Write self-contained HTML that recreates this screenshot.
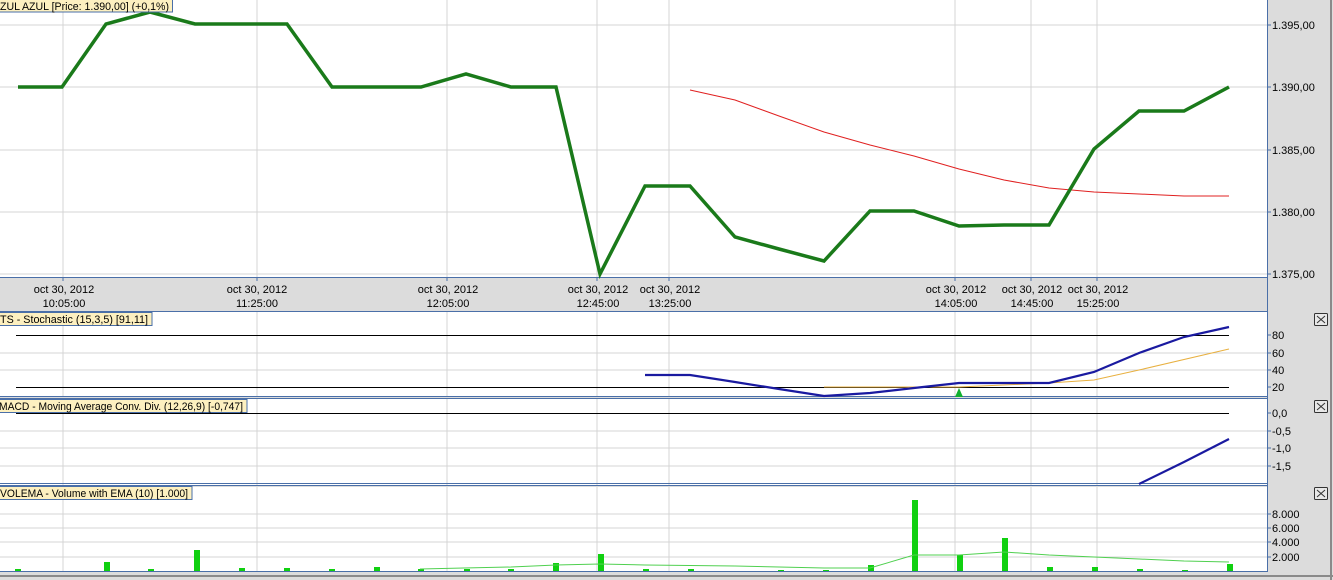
<!DOCTYPE html>
<html><head><meta charset="utf-8"><style>
html,body{margin:0;padding:0;background:#d6d6d6;}
svg{display:block;font-family:"Liberation Sans",Arial,sans-serif;}
</style></head><body>
<svg width="1333" height="580" viewBox="0 0 1333 580" xmlns="http://www.w3.org/2000/svg">
<rect x="0" y="0" width="1333" height="580" fill="#dcdcdc"/>
<line x1="1331" y1="0" x2="1331" y2="580" stroke="#8a8a8a" stroke-width="2"/>
<line x1="0" y1="576" x2="1333" y2="576" stroke="#8a8a8a" stroke-width="2"/>
<rect x="0" y="0" width="1267" height="277" fill="#fff"/>
<rect x="0" y="312" width="1267" height="85" fill="#fff"/>
<rect x="0" y="399" width="1267" height="86" fill="#fff"/>
<rect x="0" y="487" width="1267" height="84" fill="#fff"/>
<g stroke="#d4d4d4" stroke-width="1">
<line x1="0" y1="25" x2="1267" y2="25"/><line x1="0" y1="87" x2="1267" y2="87"/><line x1="0" y1="150" x2="1267" y2="150"/><line x1="0" y1="212" x2="1267" y2="212"/><line x1="0" y1="274" x2="1267" y2="274"/>
<line x1="0" y1="353" x2="1267" y2="353"/><line x1="0" y1="370" x2="1267" y2="370"/>
<line x1="0" y1="431" x2="1267" y2="431"/><line x1="0" y1="448" x2="1267" y2="448"/><line x1="0" y1="466" x2="1267" y2="466"/>
<line x1="0" y1="514" x2="1267" y2="514"/><line x1="0" y1="528" x2="1267" y2="528"/><line x1="0" y1="542" x2="1267" y2="542"/><line x1="0" y1="557" x2="1267" y2="557"/>
<g id="vg">
<line x1="63" y1="0" x2="63" y2="277"/><line x1="257" y1="0" x2="257" y2="277"/><line x1="447" y1="0" x2="447" y2="277"/><line x1="597" y1="0" x2="597" y2="277"/><line x1="669" y1="0" x2="669" y2="277"/><line x1="955" y1="0" x2="955" y2="277"/><line x1="1031" y1="0" x2="1031" y2="277"/><line x1="1097" y1="0" x2="1097" y2="277"/>
</g>
<use href="#vg" transform="translate(0,312) scale(1,0.307)"/>
<use href="#vg" transform="translate(0,399) scale(1,0.31)"/>
<use href="#vg" transform="translate(0,487) scale(1,0.303)"/>
</g>
<g fill="none" stroke="#4a6fa8" stroke-width="1">
<line x1="0" y1="277.5" x2="1267" y2="277.5"/>
<line x1="1267.5" y1="0" x2="1267.5" y2="572"/>
<line x1="0" y1="311.5" x2="1267" y2="311.5"/>
<line x1="0" y1="396.5" x2="1267" y2="396.5"/>
<line x1="0" y1="398.5" x2="1267" y2="398.5"/>
<line x1="0" y1="483.5" x2="1267" y2="483.5"/>
<line x1="0" y1="485.5" x2="1267" y2="485.5"/>
<line x1="0" y1="571.5" x2="1267" y2="571.5"/>
</g>
<polyline fill="none" stroke="#e02020" stroke-width="1" points="690,90 735,100 779,116 824,132 870,145 914,156 959,169 1004,180 1049,188 1094,192 1139,194 1184,196 1229,196"/>
<polyline fill="none" stroke="#1a7a1a" stroke-width="3.5" points="18,87 62,87 106,24 150,12 195,24 240,24 287,24 332,87 376,87 421,87 466,74 511,87 556,87 600,274 645,186 690,186 735,237 779,249 824,261 870,211 914,211 959,226 1004,225 1049,225 1094,149 1139,111 1184,111 1229,87"/>
<rect x="-1" y="-1" width="173.5" height="13" fill="#fdf0c0" stroke="#4a6fa8"/>
<text x="0" y="10" font-size="11" textLength="169" lengthAdjust="spacingAndGlyphs">ZUL AZUL [Price: 1.390,00] (+0,1%)</text>
<g font-size="11" fill="#000">
<g stroke="#4a6fa8"><line x1="1267" y1="25" x2="1271" y2="25"/><line x1="1267" y1="87" x2="1271" y2="87"/><line x1="1267" y1="150" x2="1271" y2="150"/><line x1="1267" y1="212" x2="1271" y2="212"/><line x1="1267" y1="274" x2="1271" y2="274"/></g>
<text x="1272" y="29">1.395,00</text><text x="1272" y="91">1.390,00</text><text x="1272" y="154">1.385,00</text><text x="1272" y="216">1.380,00</text><text x="1272" y="278">1.375,00</text>
</g>
<g font-size="11" fill="#000" text-anchor="middle">
<text x="64" y="293">oct 30, 2012</text><text x="64" y="307">10:05:00</text>
<text x="257" y="293">oct 30, 2012</text><text x="257" y="307">11:25:00</text>
<text x="448" y="293">oct 30, 2012</text><text x="448" y="307">12:05:00</text>
<text x="598" y="293">oct 30, 2012</text><text x="598" y="307">12:45:00</text>
<text x="670" y="293">oct 30, 2012</text><text x="670" y="307">13:25:00</text>
<text x="956" y="293">oct 30, 2012</text><text x="956" y="307">14:05:00</text>
<text x="1032" y="293">oct 30, 2012</text><text x="1032" y="307">14:45:00</text>
<text x="1098" y="293">oct 30, 2012</text><text x="1098" y="307">15:25:00</text>
</g>
<g stroke="#4a6fa8"><line x1="63" y1="277" x2="63" y2="281"/><line x1="257" y1="277" x2="257" y2="281"/><line x1="447" y1="277" x2="447" y2="281"/><line x1="597" y1="277" x2="597" y2="281"/><line x1="669" y1="277" x2="669" y2="281"/><line x1="955" y1="277" x2="955" y2="281"/><line x1="1031" y1="277" x2="1031" y2="281"/><line x1="1097" y1="277" x2="1097" y2="281"/></g>
<line x1="16" y1="335.5" x2="1229" y2="335.5" stroke="#000"/>
<line x1="16" y1="387.5" x2="1229" y2="387.5" stroke="#000"/>
<polyline fill="none" stroke="#e8b040" stroke-width="1" points="824,387 959,387 1049,383 1094,380 1139,370 1229,349"/>
<polyline fill="none" stroke="#1a1aa0" stroke-width="2.2" points="645,375 690,375 735,382 779,389 824,396 870,393 914,388 959,383 1004,383 1049,383 1094,372 1139,353 1184,337 1229,327"/>
<polygon points="959,388 955,397 963,397" fill="#10b030"/>
<rect x="-1" y="312.5" width="153" height="13" fill="#fdf0c0" stroke="#4a6fa8"/>
<text x="0" y="323" font-size="11" textLength="148" lengthAdjust="spacingAndGlyphs">TS - Stochastic (15,3,5) [91,11]</text>
<g font-size="11"><text x="1272" y="339">80</text><text x="1272" y="357">60</text><text x="1272" y="374">40</text><text x="1272" y="391">20</text></g>
<line x1="16" y1="413.5" x2="1229" y2="413.5" stroke="#000"/>
<polyline fill="none" stroke="#1a1aa0" stroke-width="2.2" points="1139,484 1184,462 1229,439"/>
<rect x="-1" y="399.5" width="248" height="13" fill="#fdf0c0" stroke="#4a6fa8"/>
<text x="-1" y="410" font-size="11" textLength="244" lengthAdjust="spacingAndGlyphs">MACD - Moving Average Conv. Div. (12,26,9) [-0,747]</text>
<g font-size="11"><text x="1272" y="417">0,0</text><text x="1272" y="435">-0,5</text><text x="1272" y="452">-1,0</text><text x="1272" y="470">-1,5</text></g>
<g fill="#10d010">
<rect x="15" y="569" width="6" height="2"/><rect x="104" y="562" width="6" height="9"/><rect x="148" y="569" width="6" height="2"/><rect x="194" y="550" width="6" height="21"/><rect x="239" y="568" width="6" height="3"/><rect x="284" y="568" width="6" height="3"/><rect x="329" y="569" width="6" height="2"/><rect x="374" y="567" width="6" height="4"/><rect x="418" y="569" width="6" height="2"/><rect x="464" y="569" width="6" height="2"/><rect x="508" y="569" width="6" height="2"/><rect x="553" y="563" width="6" height="8"/><rect x="598" y="554" width="6" height="17"/><rect x="643" y="569" width="6" height="2"/><rect x="688" y="569" width="6" height="2"/><rect x="778" y="570" width="6" height="1"/><rect x="823" y="570" width="6" height="1"/><rect x="868" y="565" width="6" height="6"/><rect x="912" y="500" width="6" height="71"/><rect x="957" y="555" width="6" height="16"/><rect x="1002" y="538" width="6" height="33"/><rect x="1047" y="567" width="6" height="4"/><rect x="1092" y="567" width="6" height="4"/><rect x="1137" y="569" width="6" height="2"/><rect x="1182" y="570" width="6" height="1"/><rect x="1227" y="564" width="6" height="7"/>
</g>
<polyline fill="none" stroke="#50d050" stroke-width="1" points="420,569 464,568 511,567 556,565 600,564 645,565 735,566 824,568 870,568 914,555 959,555 1004,552 1049,555 1094,557 1139,559 1184,561 1229,562"/>
<rect x="-1" y="486.5" width="193" height="13" fill="#fdf0c0" stroke="#4a6fa8"/>
<text x="0" y="497" font-size="11" textLength="188" lengthAdjust="spacingAndGlyphs">VOLEMA - Volume with EMA (10) [1.000]</text>
<g font-size="11"><text x="1272" y="518">8.000</text><text x="1272" y="532">6.000</text><text x="1272" y="546">4.000</text><text x="1272" y="561">2.000</text></g>
<g stroke="#4a6fa8"><line x1="1267" y1="335" x2="1271" y2="335"/><line x1="1267" y1="353" x2="1271" y2="353"/><line x1="1267" y1="370" x2="1271" y2="370"/><line x1="1267" y1="387" x2="1271" y2="387"/><line x1="1267" y1="413" x2="1271" y2="413"/><line x1="1267" y1="431" x2="1271" y2="431"/><line x1="1267" y1="448" x2="1271" y2="448"/><line x1="1267" y1="466" x2="1271" y2="466"/><line x1="1267" y1="514" x2="1271" y2="514"/><line x1="1267" y1="528" x2="1271" y2="528"/><line x1="1267" y1="542" x2="1271" y2="542"/><line x1="1267" y1="557" x2="1271" y2="557"/></g>
<g fill="#e8e8e8" stroke="#333" stroke-width="1">
<rect x="1314.5" y="313.5" width="13" height="12" rx="1"/><path d="M1317 316 L1325 323 M1325 316 L1317 323" fill="none"/>
<rect x="1314.5" y="400.5" width="13" height="12" rx="1"/><path d="M1317 403 L1325 410 M1325 403 L1317 410" fill="none"/>
<rect x="1314.5" y="487.5" width="13" height="12" rx="1"/><path d="M1317 490 L1325 497 M1325 490 L1317 497" fill="none"/>
</g>
</svg>
</body></html>
